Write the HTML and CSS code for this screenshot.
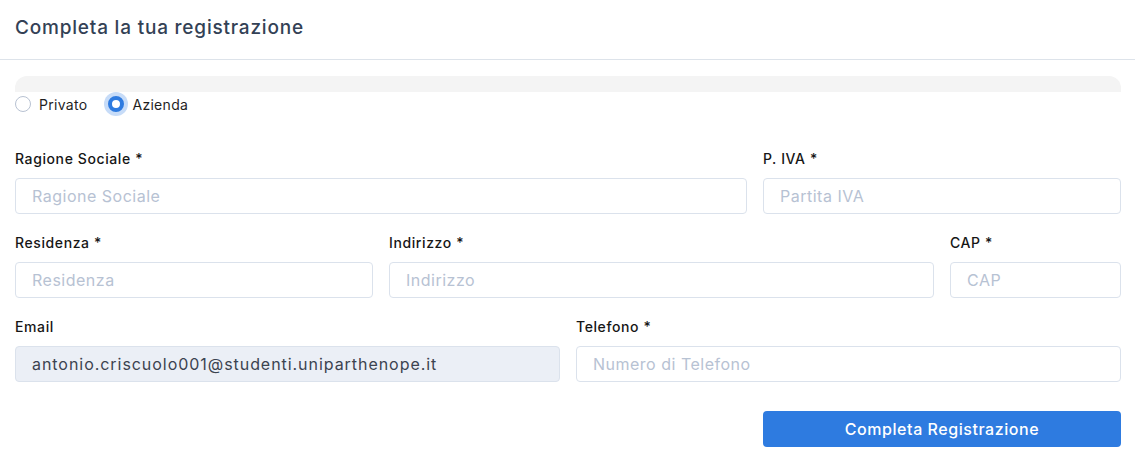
FILE: index.html
```html
<!DOCTYPE html>
<html lang="it">
<head>
<meta charset="utf-8">
<title>Completa la tua registrazione</title>
<link rel="stylesheet" href="styles.css">
</head>
<body>
<header class="header">
  <h1 class="title">Completa la tua registrazione</h1>
</header>
<main class="content">
  <div class="bar"></div>
  <div class="radios">
    <label class="radio"><input type="radio" name="tipo" class="radio-input"><span>Privato</span></label>
    <label class="radio"><input type="radio" name="tipo" class="radio-input" checked><span>Azienda</span></label>
  </div>
  <form class="form">
    <div class="row row-1">
      <div class="field"><label class="label">Ragione Sociale *</label><input class="input" placeholder="Ragione Sociale"></div>
      <div class="field"><label class="label">P. IVA *</label><input class="input" placeholder="Partita IVA"></div>
    </div>
    <div class="row row-2">
      <div class="field"><label class="label">Residenza *</label><input class="input" placeholder="Residenza"></div>
      <div class="field"><label class="label">Indirizzo *</label><input class="input" placeholder="Indirizzo"></div>
      <div class="field"><label class="label">CAP *</label><input class="input" placeholder="CAP"></div>
    </div>
    <div class="row row-3">
      <div class="field"><label class="label">Email</label><input class="input input-readonly" value="antonio.criscuolo001@studenti.uniparthenope.it" readonly></div>
      <div class="field"><label class="label">Telefono *</label><input class="input" placeholder="Numero di Telefono"></div>
    </div>
    <div class="actions">
      <button type="button" class="btn">Completa Registrazione</button>
    </div>
  </form>
</main>
</body>
</html>
```
FILE: styles.css
```css
* { box-sizing: border-box; }
html, body { margin: 0; background: #fff; }
body {
  font-family: Inter, "Noto Sans", "Liberation Sans", sans-serif;
  color: #1b1b1b;
}
.header {
  height: 60px;
  padding: 16px 15px 0;
  border-bottom: 1px solid #dde3ea;
}
.title {
  margin: 0;
  font-size: 19px;
  line-height: 24px;
  font-weight: 500;
  letter-spacing: 0.8px;
  color: #334155;
}
.content {
  padding: 16px 14px 0 15px;
}
.bar {
  height: 16px;
  background: #f4f4f4;
  border-radius: 12px 12px 0 0;
}
.radios {
  display: flex;
  align-items: center;
  height: 24px;
  gap: 21px;
}
.radio {
  display: flex;
  align-items: center;
  gap: 8px;
  font-size: 14px;
  letter-spacing: 0.3px;
  color: #1f1f1f;
}
.radio-input {
  appearance: none;
  -webkit-appearance: none;
  margin: 0;
  width: 16px;
  height: 16px;
  border: 1px solid #b8c2d2;
  border-radius: 50%;
  background: #fff;
}
.radio-input:checked {
  border: 4px solid #2e7be0;
  background: #fff;
  box-shadow: 0 0 0 4px #c7dcf8;
}
.form {
  margin-top: 32px;
  display: flex;
  flex-direction: column;
  gap: 18px;
}
.row {
  display: grid;
  gap: 16px;
}
.row-1 { grid-template-columns: 732fr 358fr; }
.row-2 { grid-template-columns: 358fr 545fr 171fr; }
.row-3 { grid-template-columns: 1fr 1fr; }
.field {
  display: flex;
  flex-direction: column;
  gap: 9px;
}
.label {
  padding-top: 1px;
  font-size: 14px;
  line-height: 20px;
  font-weight: 500;
  letter-spacing: 0.6px;
  color: #161616;
}
.input {
  height: 36px;
  width: 100%;
  padding: 0 16px;
  border: 1px solid #dbe2ec;
  border-radius: 4px;
  font-family: inherit;
  font-size: 16px;
  letter-spacing: 0.95px;
  color: #3b4350;
  background: #fff;
  outline: none;
}
.input::placeholder { color: #b7c2d3; letter-spacing: 0.5px; }
.input-readonly { background: #ebeff6; }
.actions {
  display: flex;
  justify-content: flex-end;
  padding-top: 11px;
}
.btn {
  width: 358px;
  height: 36px;
  border: 0;
  border-radius: 4px;
  background: #2e7be0;
  color: #fff;
  font-family: inherit;
  font-size: 16px;
  font-weight: 500;
  letter-spacing: 0.55px;
}
```
